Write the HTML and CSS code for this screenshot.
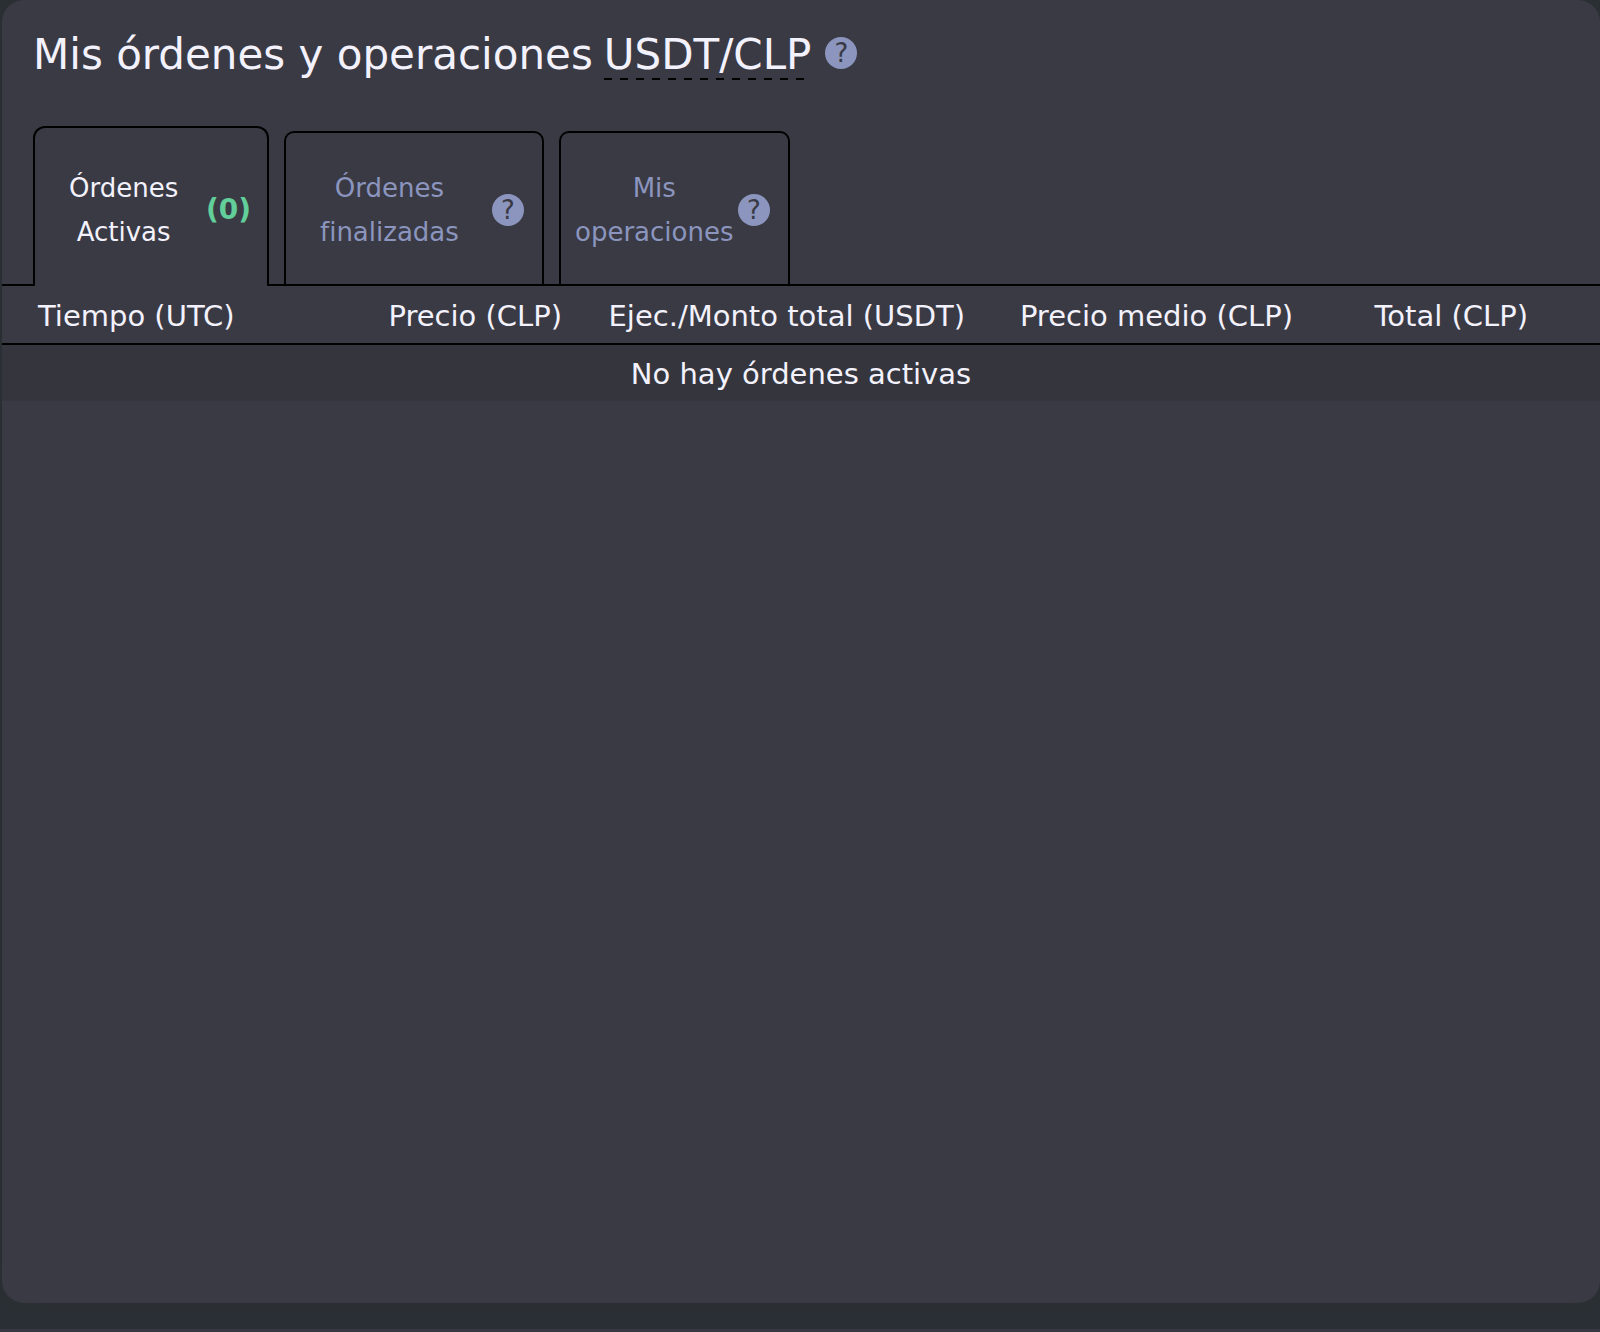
FILE: index.html
```html
<!DOCTYPE html>
<html lang="es">
<head>
<meta charset="utf-8">
<meta name="viewport" content="width=device-width, initial-scale=1">
<title>Mis órdenes y operaciones</title>
<link rel="stylesheet" href="styles.css">
</head>
<body>
<main class="panel">
  <header class="panel-header">
    <h1 class="title"><span class="title-text">Mis órdenes y operaciones</span> <span class="pair">USDT/CLP</span></h1>
    <button class="help" type="button">?</button>
  </header>
  <div class="tabs" role="tablist">
    <button class="tab tab-active" type="button" role="tab" aria-selected="true">
      <span class="tab-label">Órdenes Activas</span>
      <span class="count">(0)</span>
    </button>
    <button class="tab tab-finished" type="button" role="tab" aria-selected="false">
      <span class="tab-label">Órdenes finalizadas</span>
      <span class="help">?</span>
    </button>
    <button class="tab tab-trades" type="button" role="tab" aria-selected="false">
      <span class="tab-label">Mis operaciones</span>
      <span class="help">?</span>
    </button>
  </div>
  <table class="orders">
    <colgroup>
      <col class="col-time"><col class="col-price"><col class="col-amount"><col class="col-average"><col class="col-total"><col class="col-actions">
    </colgroup>
    <thead>
      <tr>
        <th scope="col">Tiempo (UTC)</th>
        <th scope="col">Precio (CLP)</th>
        <th scope="col">Ejec./Monto total (USDT)</th>
        <th scope="col">Precio medio (CLP)</th>
        <th scope="col">Total (CLP)</th>
        <td></td>
      </tr>
    </thead>
    <tbody>
      <tr><td class="empty" colspan="6">No hay órdenes activas</td></tr>
    </tbody>
  </table>
</main>
<div class="next-panel"></div>
</body>
</html>
```
FILE: styles.css
```css
* {
  box-sizing: border-box;
}

body {
  display: flex;
  flex-direction: column;
  min-height: 100vh;
  margin: 0;
  background: #2b3036;
  color: #f3f2fc;
  font-family: "DejaVu Sans", Verdana, sans-serif;
}

button {
  margin: 0;
  padding: 0;
  border: 0;
  background: none;
  color: inherit;
  font: inherit;
}

.panel {
  flex: 1;
  margin: 0 0 26px 2px;
  border-radius: 22px;
  background: #3a3a45;
  box-shadow: 0 0 24px #2b2f31;
}

.panel-header {
  display: flex;
  align-items: center;
  gap: 14px;
  height: 106px;
  padding: 0 31px;
}

.title {
  display: flex;
  gap: 11px;
  margin: 0;
  font-size: 42px;
  font-weight: 400;
  line-height: 48px;
}

.title-text,
.pair {
  padding: 4px 0 1px;
}

.pair {
  background: repeating-linear-gradient(90deg, #000 0 8px, transparent 8px 16px) bottom / 100% 2px no-repeat;
}

.help {
  display: flex;
  flex: none;
  align-items: center;
  justify-content: center;
  width: 32px;
  height: 32px;
  border-radius: 50%;
  background: #8b95be;
  color: #3a3a45;
  font-size: 26px;
  line-height: 32px;
}

.tabs {
  display: flex;
  align-items: flex-end;
  gap: 15px;
  height: 180px;
  padding: 0 31px;
  background: linear-gradient(#000, #000) bottom / 100% 2px no-repeat;
}

.tab {
  display: flex;
  align-items: center;
  justify-content: space-between;
  height: 155px;
  border: 2px solid #000;
  border-bottom: 0;
  border-radius: 10px 10px 0 0;
  color: #8b95be;
  font-size: 26px;
  line-height: 44px;
  text-align: center;
}

.tab-active {
  width: 236px;
  height: 160px;
  padding: 6px 16px 0 34px;
  border-radius: 12px 12px 0 0;
  background: #3a3a45;
  color: #f3f2fc;
}

.tab-finished {
  width: 260px;
  padding: 0 18px 0 34px;
}

.tab-trades {
  width: 231px;
  padding: 0 18px 0 14px;
}

.tab-label {
  width: min-content;
}

.count {
  color: #62ce99;
  font-size: 28px;
  font-weight: 700;
}

.orders {
  width: 100%;
  border-collapse: collapse;
  table-layout: fixed;
  font-size: 29px;
  line-height: 53px;
}

.orders th {
  padding: 4px 0 0;
  font-weight: 400;
  text-align: right;
  white-space: nowrap;
}

.orders th:first-child {
  padding-left: 36px;
  text-align: left;
}

.orders thead {
  border-bottom: 2px solid #000;
}

.orders .empty {
  padding: 3px 0 0;
  background: #35353e;
  text-align: center;
}

.col-time {
  width: 260px;
}

.col-price {
  width: 300px;
}

.col-amount {
  width: 403px;
}

.col-average {
  width: 328px;
}

.col-total {
  width: 235px;
}

.col-actions {
  width: 72px;
}

.next-panel {
  height: 3px;
  background: #373844;
}
```
